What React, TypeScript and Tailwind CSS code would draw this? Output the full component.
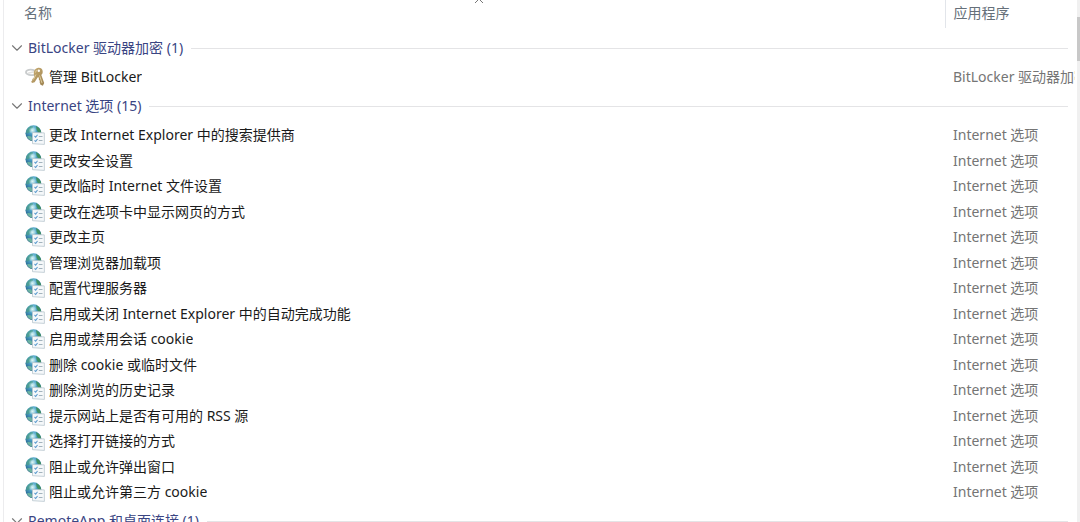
import { useState } from 'react';
import { ChevronDown, ChevronRight } from 'lucide-react';

interface Group {
  title: string;
  app: string;
  icon: 'keys' | 'globe';
  count: number;
  items: string[];
}

const groups: Group[] = [
  {
    title: 'BitLocker 驱动器加密',
    app: 'BitLocker 驱动器加密',
    icon: 'keys',
    count: 1,
    items: ['管理 BitLocker'],
  },
  {
    title: 'Internet 选项',
    app: 'Internet 选项',
    icon: 'globe',
    count: 15,
    items: [
      '更改 Internet Explorer 中的搜索提供商',
      '更改安全设置',
      '更改临时 Internet 文件设置',
      '更改在选项卡中显示网页的方式',
      '更改主页',
      '管理浏览器加载项',
      '配置代理服务器',
      '启用或关闭 Internet Explorer 中的自动完成功能',
      '启用或禁用会话 cookie',
      '删除 cookie 或临时文件',
      '删除浏览的历史记录',
      '提示网站上是否有可用的 RSS 源',
      '选择打开链接的方式',
      '阻止或允许弹出窗口',
      '阻止或允许第三方 cookie',
    ],
  },
  {
    title: 'RemoteApp 和桌面连接',
    app: 'RemoteApp 和桌面连接',
    icon: 'globe',
    count: 1,
    items: [],
  },
];

// Gradients shared by every row icon
function IconDefs() {
  return (
    <svg width="0" height="0" className="absolute" aria-hidden="true">
      <defs>
        <radialGradient id="globe-fill" cx="0.45" cy="0.25" r="0.75">
          <stop offset="0" stopColor="#8fd0e4" />
          <stop offset="0.4" stopColor="#4a9fc4" />
          <stop offset="0.8" stopColor="#2a6c96" />
          <stop offset="1" stopColor="#2b5c7c" />
        </radialGradient>
        <radialGradient id="globe-shine" cx="0.5" cy="0.5" r="0.5">
          <stop offset="0" stopColor="#e4f8f4" stopOpacity="0.9" />
          <stop offset="1" stopColor="#e4f8f4" stopOpacity="0" />
        </radialGradient>
        <linearGradient id="key-fill" x1="0" y1="0" x2="1" y2="1">
          <stop offset="0" stopColor="#c9ad72" />
          <stop offset="1" stopColor="#9d8352" />
        </linearGradient>
      </defs>
    </svg>
  );
}

function GlobeIcon() {
  return (
    <svg width="20" height="20" viewBox="0 0 20 20" className="shrink-0" aria-hidden="true">
      <circle cx="8.5" cy="8.3" r="8" fill="url(#globe-fill)" />
      <path d="M1.500 5C3 2.200 5.500 1 7.500 1l.5 1.500-2 1.500L5.500 6 4 8l-2.500.5C1 7.500 1 6.200 1.500 5z" fill="#4c9c84" opacity=".7" />
      <path d="M11 1.200c2.500.8 4.300 2.600 5 5.300l-.3 1.500-2.500-.5-1.500-2.500z" fill="#3f8f62" />
      <path d="M3 11l3.500.5 1 4.200C5 15.500 3 13.800 2 11.800z" fill="#7cc4a2" opacity=".8" />
      <ellipse cx="7.5" cy="5.5" rx="4" ry="3.5" fill="url(#globe-shine)" />
      <path d="M7.500 7.500l11.800.4.1 11.500-11.900-.7z" fill="#f5f8fa" stroke="#b9c6ce" strokeWidth=".8" />
      <path d="M9.500 11l1.200 1.200L12.500 9.700M9.500 15.300l1.200 1.200 1.800-2.500" fill="none" stroke="#5b9bce" strokeWidth="1.100" />
      <path d="M13.800 11.500h3.700M13.800 15.500h3.700" stroke="#a3b3bd" strokeWidth="1" />
    </svg>
  );
}

function KeysIcon() {
  return (
    <svg width="20" height="20" viewBox="0 0 20 20" className="shrink-0" aria-hidden="true">
      <path d="M9.500 8C6.500 8.500 1 7.800 1 5.200 1 2.800 5.500 2 10 3.500" fill="none" stroke="#c9cccd" strokeWidth="1.800" />
      <path d="M3 6.300l7-1.800" stroke="#e0e0de" strokeWidth="1.600" />
      <path
        fillRule="evenodd"
        d="M12.500 1c3-.6 5.300 1 5.200 3.800 0 1.500-.5 2.500-1.400 3.200l2.900 8-1.300 2.700-2.400-1-1-2.700.4-1-1-1.200-.1-2.200-1-.3-3.200 5-2.600.7-.8-1.500 1-1.100.2-1.500 1.200-.8.8-2C8.200 6 8.800 1.900 12.500 1zm1.300 1.600a1.200 1.200 0 1 0 0 2.400 1.200 1.200 0 0 0 0-2.400z"
        fill="url(#key-fill)"
      />
      <path d="M14.500 8.500l2.500 7.500M11 7.500L8.500 12.500M11.500 3l-1 2.500" fill="none" stroke="#e6d6aa" strokeWidth=".8" />
    </svg>
  );
}

function GroupSection({ group }: { group: Group }) {
  const [open, setOpen] = useState(true);
  const Chevron = open ? ChevronDown : ChevronRight;

  return (
    <>
      <tbody>
        <tr>
          <th colSpan={2} scope="colgroup" className="h-8 p-0 font-normal">
            <button
              type="button"
              aria-expanded={open}
              onClick={() => setOpen(!open)}
              className="flex w-full items-center pl-1 pr-[9px] text-left text-[#3a4583]"
            >
              <Chevron size={18} strokeWidth={1.5} className="mr-0.5 shrink-0 text-[#777777]" />
              <span className="whitespace-nowrap">
                {group.title} ({group.count})
              </span>
              <span className="ml-2 h-px flex-1 bg-[#e4e4e6]" />
            </button>
          </th>
        </tr>
      </tbody>
      {open && group.items.length > 0 && (
        <tbody>
          {group.items.map((item) => (
            <tr key={item} className="odd:h-[26px] even:h-[25px]">
              <td className="p-0">
                <div className="flex items-center gap-1 pl-[21px]">
                  {group.icon === 'keys' ? <KeysIcon /> : <GlobeIcon />}
                  <span className="truncate text-[#1a1a1a]">{item}</span>
                </div>
              </td>
              <td className="py-0 pl-2 pr-0 text-[#757575]">
                <div className="mr-0.5 overflow-hidden whitespace-nowrap">{group.app}</div>
              </td>
            </tr>
          ))}
        </tbody>
      )}
    </>
  );
}

export default function App() {
  return (
    <main className="flex h-screen overflow-hidden bg-white font-['Noto_Sans','Noto_Sans_CJK_SC',sans-serif] text-sm leading-5">
      <IconDefs />
      <div className="ml-[3px] min-w-0 flex-1 overflow-hidden border-l border-[#ececee]">
        <table className="w-full table-fixed border-collapse">
          <colgroup>
            <col />
            <col className="w-[132px]" />
          </colgroup>
          <thead className="text-left text-[#66707a]">
            <tr>
              <th scope="col" className="relative h-7 pt-0 pb-0.5 pl-5 pr-0 font-normal">
                <button type="button">名称</button>
                <svg width="10" height="4" viewBox="0 0 10 4" className="absolute left-1/2 top-0" aria-hidden="true">
                  <path d="M1 3l4-4 4 4" fill="none" stroke="#777777" />
                </svg>
              </th>
              <th scope="col" className="h-7 border-l border-[#e2e5ea] pt-0 pb-0.5 pl-2 pr-0 font-normal">
                <button type="button">应用程序</button>
              </th>
            </tr>
            <tr className="h-1" />
          </thead>
          {groups.map((group) => (
            <GroupSection key={group.title} group={group} />
          ))}
        </table>
      </div>
      <div className="w-[3px] shrink-0 bg-[#f0f0f0] pt-[17px]">
        <div className="h-11 bg-[#c8c8c8]" />
      </div>
    </main>
  );
}
